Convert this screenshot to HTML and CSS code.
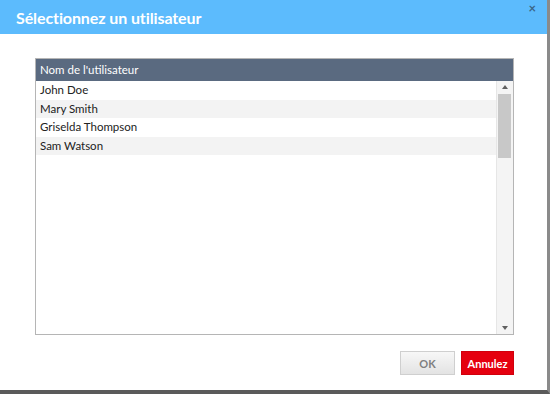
FILE: index.html
```html
<!DOCTYPE html>
<html lang="fr">
<head>
<meta charset="utf-8">
<title>Sélectionnez un utilisateur</title>
<link rel="stylesheet" href="styles.css">
</head>
<body>
<div class="dialog">
  <div class="titlebar">
    <h1 class="title">Sélectionnez un utilisateur</h1>
    <span class="close">×</span>
  </div>
  <div class="content">
    <div class="grid">
      <div class="grid-header">Nom de l'utilisateur</div>
      <div class="grid-body">
        <ul class="rows">
          <li class="row">John Doe</li>
          <li class="row alt">Mary Smith</li>
          <li class="row">Griselda Thompson</li>
          <li class="row alt">Sam Watson</li>
        </ul>
        <div class="scrollbar">
          <div class="arrow up"></div>
          <div class="track"><div class="thumb"></div></div>
          <div class="arrow down"></div>
        </div>
      </div>
    </div>
    <div class="actions">
      <button class="btn btn-ok">OK</button>
      <button class="btn btn-cancel">Annulez</button>
    </div>
  </div>
</div>
</body>
</html>
```
FILE: styles.css
```css
* { box-sizing: border-box; }
html, body { margin: 0; padding: 0; }
body {
  width: 550px;
  height: 394px;
  background: #fff;
  font-family: Lato, "Open Sans", sans-serif;
  overflow: hidden;
}
.dialog {
  width: 550px;
  height: 394px;
  border-right: 3px solid #8a8a8a;
  border-bottom: 4px solid #5a5a5a;
  display: flex;
  flex-direction: column;
}
.titlebar {
  position: relative;
  height: 34px;
  background: #5cbbfd;
  display: flex;
  align-items: center;
  padding-left: 16px;
  flex: none;
}
.title {
  margin: 0;
  color: #fff;
  font-size: 16px;
  font-weight: 700;
  letter-spacing: -0.1px;
}
.close {
  position: absolute;
  top: 0px;
  right: 11px;
  color: #3b6688;
  font-size: 13px;
  font-weight: 700;
  line-height: 16px;
}
.content {
  padding: 24px 33px 0 35px;
  flex: 1;
  display: flex;
  flex-direction: column;
}
.grid {
  height: 277px;
  border: 1px solid #b5b5b5;
  display: flex;
  flex-direction: column;
}
.grid-header {
  height: 22px;
  background: #5a6a80;
  color: #fff;
  font-size: 11.5px;
  line-height: 22px;
  padding-left: 4px;
  flex: none;
}
.grid-body {
  flex: 1;
  display: flex;
  min-height: 0;
}
.rows {
  list-style: none;
  margin: 0;
  padding: 0;
  flex: 1;
}
.row {
  height: 18.5px;
  line-height: 18.5px;
  font-size: 11.5px;
  color: #222;
  padding-left: 4px;
}
.row.alt { background: #f3f3f3; }
.scrollbar {
  width: 17px;
  background: #f4f4f4;
  border-left: 1px solid #e6e6e6;
  display: flex;
  flex-direction: column;
  padding: 0 1px 0 1px;
}
.arrow {
  height: 13px;
  flex: none;
  position: relative;
}
.arrow::after {
  content: "";
  position: absolute;
  left: 4px;
  width: 0;
  height: 0;
  border-left: 3px solid transparent;
  border-right: 3px solid transparent;
}
.arrow.up::after { top: 4px; border-bottom: 4px solid #606060; }
.arrow.down::after { top: 5px; border-top: 4px solid #606060; }
.track { flex: 1; }
.thumb {
  width: 13px;
  height: 64px;
  background: #c8c8c8;
}
.actions {
  display: flex;
  justify-content: flex-end;
  gap: 6px;
  margin-top: 16px;
}
.btn {
  height: 24px;
  border-radius: 0;
  font-family: Lato, "Open Sans", sans-serif;
  font-size: 11px;
  font-weight: 700;
  cursor: pointer;
  padding: 0;
}
.btn-ok {
  width: 55px;
  background: linear-gradient(#f7f7f7, #e3e3e3);
  border: 1px solid #cfcfcf;
  color: #808080;
}
.btn-cancel {
  width: 53px;
  background: #e5000f;
  border: 1px solid #d0000c;
  color: #fff;
}
```
